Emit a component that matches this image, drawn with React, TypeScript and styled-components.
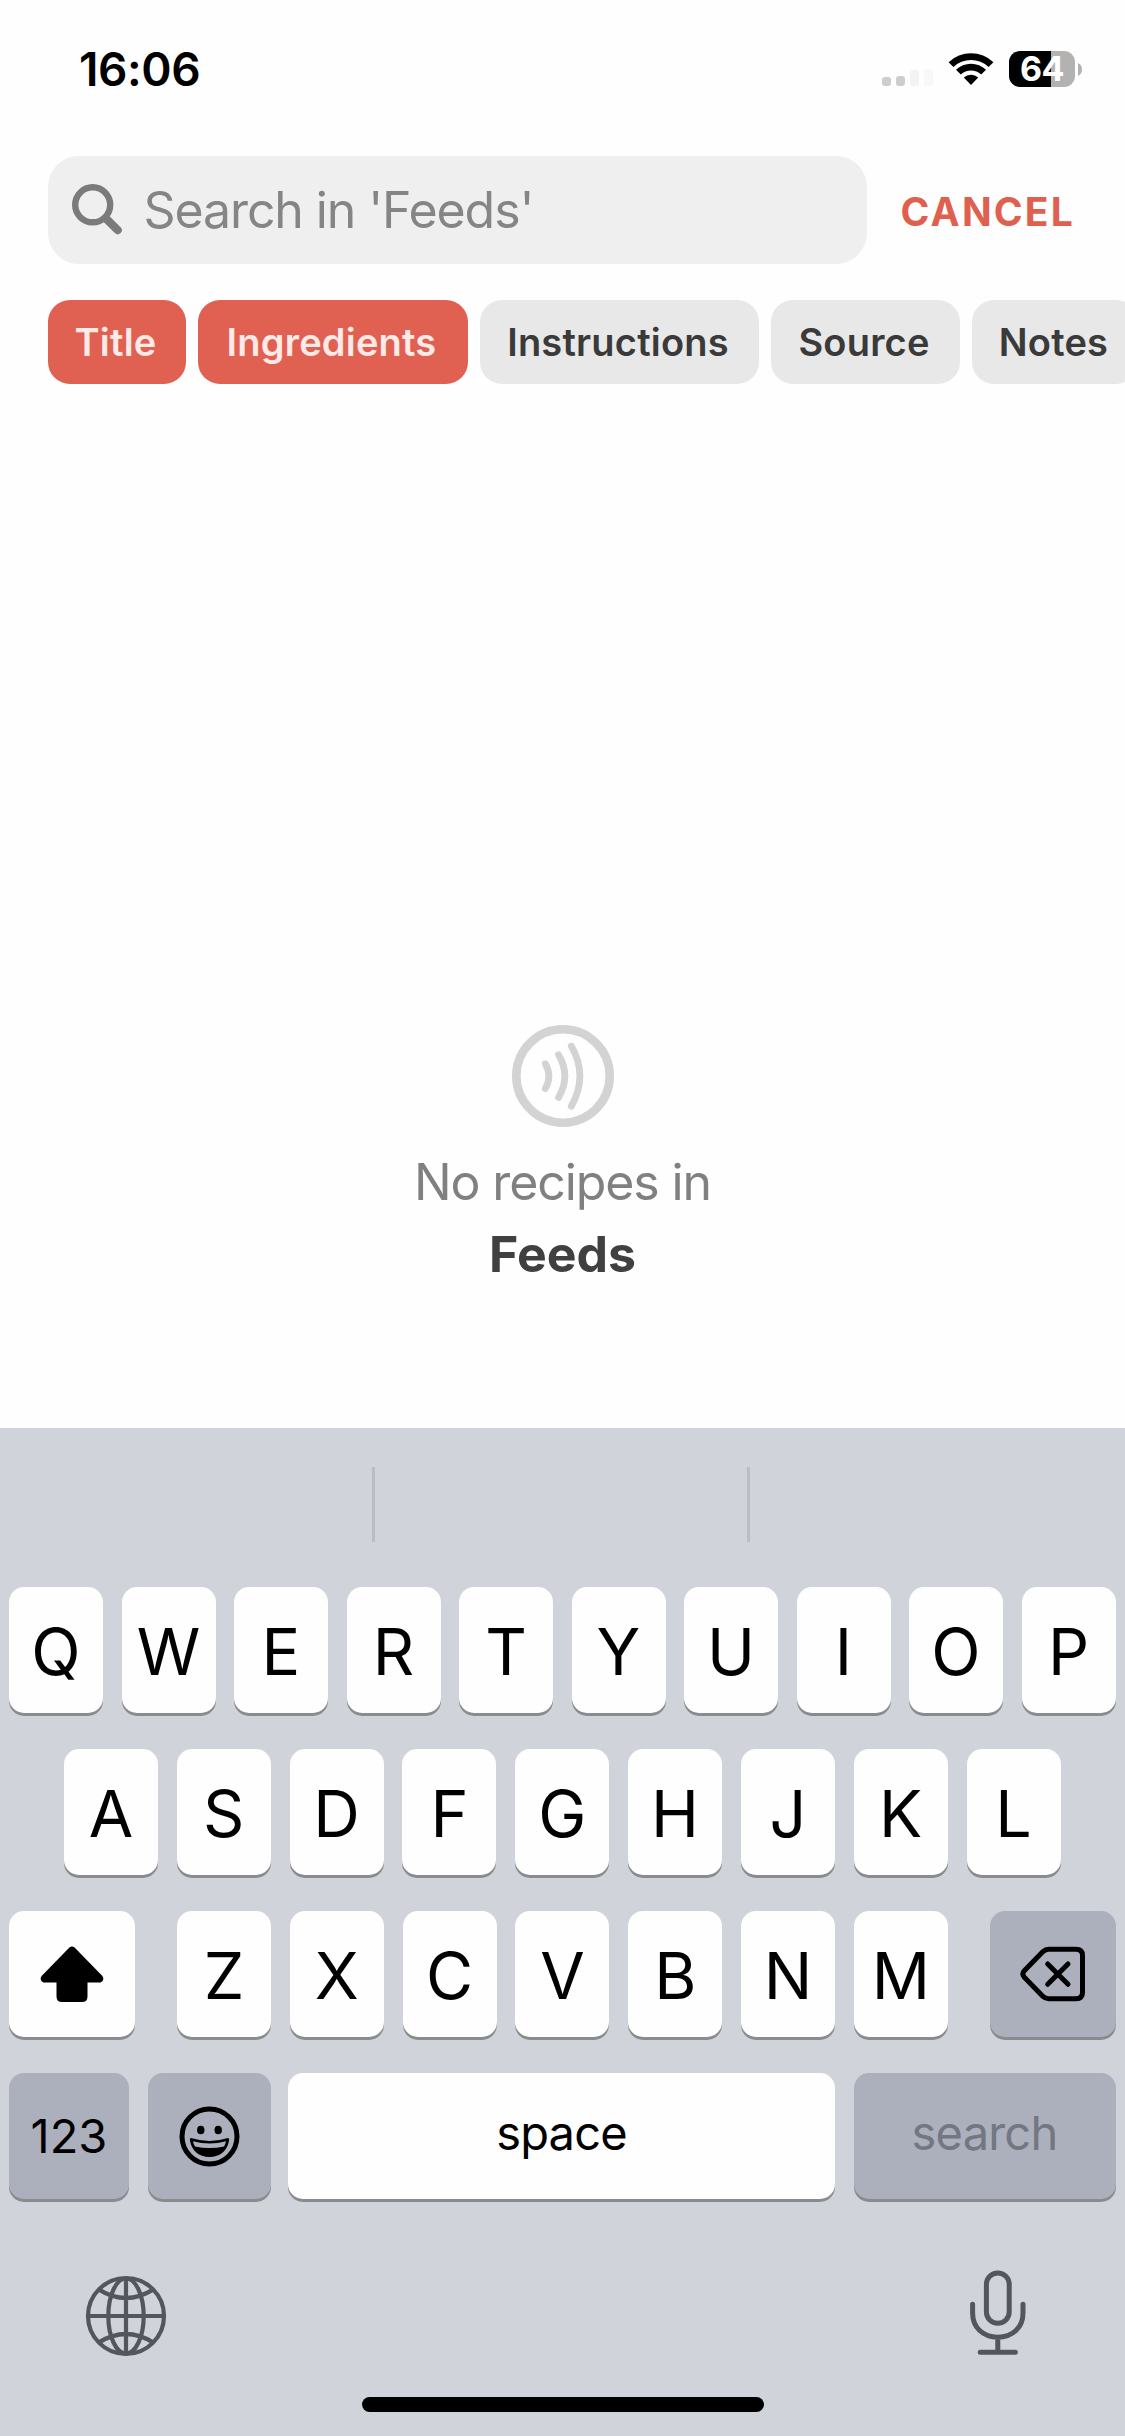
import React from "react";
import styled, { createGlobalStyle } from "styled-components";

const GlobalStyle = createGlobalStyle`
  * { box-sizing: border-box; }
  html, body { margin: 0; padding: 0; background: #fefefe; }
`;

const Screen = styled.div`
  width: 1125px;
  height: 2436px;
  display: flex;
  flex-direction: column;
  overflow: hidden;
  background: #fefefe;
  font-family: Inter, "Liberation Sans", sans-serif;
  svg { display: block; flex: none; }
`;

const StatusBar = styled.header`
  height: 138px;
  padding: 0 43px 0 79px;
  display: flex;
  align-items: center;
  justify-content: space-between;
`;

const Clock = styled.span`
  font-size: 46px;
  line-height: 60px;
  font-weight: 600;
  letter-spacing: -0.4px;
  color: #000;
`;

const StatusIcons = styled.div`
  display: flex;
  align-items: center;
  gap: 15px;
`;

const SignalBox = styled.div`
  padding-top: 16px;
`;

const Battery = styled.div`
  display: flex;
  align-items: center;
  gap: 3px;
`;

const BatteryBody = styled.div<{ $level: number }>`
  width: 66px;
  height: 36px;
  border-radius: 11px;
  display: flex;
  align-items: center;
  justify-content: center;
  background: linear-gradient(
    to right,
    #000 ${(p) => p.$level}%,
    #b2b2b2 ${(p) => p.$level}%
  );
  color: #fff;
  font-size: 34px;
  line-height: 36px;
  font-weight: 700;
  letter-spacing: -0.5px;
`;

const SearchRow = styled.div`
  height: 108px;
  margin-top: 18px;
  padding: 0 50px 0 48px;
  display: flex;
  align-items: center;
  justify-content: space-between;
`;

const SearchField = styled.div`
  width: 819px;
  height: 108px;
  padding-left: 24px;
  display: flex;
  align-items: center;
  gap: 19.5px;
  border-radius: 31px;
  background: #efefef;
`;

const Placeholder = styled.span`
  font-size: 50px;
  line-height: 60px;
  letter-spacing: -1.1px;
  color: #858585;
  white-space: nowrap;
`;

const Cancel = styled.button`
  border: 0;
  background: none;
  padding: 3px 0 0;
  font: 700 39px/48px Inter, "Liberation Sans", sans-serif;
  letter-spacing: 2.2px;
  color: #e06050;
`;

const Filters = styled.div`
  height: 84px;
  margin-top: 36px;
  padding-left: 48px;
  display: flex;
  gap: 12px;
`;

const Chip = styled.button<{ $active?: boolean; $width: number }>`
  flex: none;
  width: ${(p) => p.$width}px;
  height: 84px;
  padding: 0 3px 0 0;
  border: 0;
  border-radius: 22px;
  background: ${(p) => (p.$active ? "#e06051" : "#e8e8e8")};
  color: ${(p) => (p.$active ? "#ffeae7" : "#3a3a3a")};
  font: 600 38px/84px Inter, "Liberation Sans", sans-serif;
  letter-spacing: 0.2px;
  text-align: center;
`;

const EmptyState = styled.main`
  flex: 1;
  padding-top: 641px;
  display: flex;
  flex-direction: column;
  align-items: center;
`;

const EmptyText = styled.p`
  margin: 19px 0 0;
  font-size: 50px;
  line-height: 72px;
  text-align: center;
  letter-spacing: -1.1px;
  color: #808080;
`;

const EmptyName = styled.strong`
  display: block;
  font-weight: 700;
  color: #404040;
  letter-spacing: 0;
`;

const Keyboard = styled.section`
  height: 1008px;
  display: flex;
  flex-direction: column;
  background: #d0d3da;
`;

const Suggestions = styled.div`
  height: 159px;
  padding-top: 39px;
  display: grid;
  grid-template-columns: 375px 375px 1fr;
`;

const Suggestion = styled.div<{ $divided?: boolean }>`
  height: 75px;
  border-right: ${(p) => (p.$divided ? "3px solid #bbbdc2" : "0")};
`;

const KeyRow = styled.div<{ $left: number; $right: number }>`
  height: 126px;
  margin-bottom: 36px;
  padding: 0 ${(p) => p.$right}px 0 ${(p) => p.$left}px;
  display: flex;
  justify-content: space-between;
`;

const LetterGroup = styled.div`
  width: 771px;
  display: flex;
  justify-content: space-between;
`;

const ModeGroup = styled.div`
  display: flex;
  gap: 19px;
`;

const SpaceGroup = styled.div`
  display: flex;
  gap: 18.5px;
`;

const Key = styled.button<{ $width?: number; $dim?: boolean }>`
  flex: none;
  width: ${(p) => p.$width ?? 94}px;
  height: 126px;
  padding: 3px 0 0;
  border: 0;
  border-radius: 15px;
  display: flex;
  align-items: center;
  justify-content: center;
  background: ${(p) => (p.$dim ? "#abb0bc" : "#fefefe")};
  box-shadow: 0 3px 0 #898b8f;
  color: #000;
  font: 400 64.5px/78px Inter, "Liberation Sans", sans-serif;
`;

const IconKey = styled(Key)`
  padding: 0;
`;

const WordKey = styled(Key)<{ $muted?: boolean }>`
  padding: 0 0 7px;
  font-size: 47px;
  letter-spacing: -0.8px;
  color: ${(p) => (p.$muted ? "#737782" : "#000")};
`;

const NumberKey = styled(Key)`
  padding: 0;
  font-size: 47px;
  letter-spacing: 0;
`;

const Dock = styled.div`
  height: 120px;
  margin-top: 17px;
  padding: 18px 97px 0 85px;
  display: flex;
  justify-content: space-between;
`;

const GlobeBox = styled.div`
  padding-top: 5px;
`;

const HomeIndicator = styled.div`
  width: 402px;
  height: 15px;
  margin: 25px auto 0;
  border-radius: 8px;
  background: #000;
`;

const SignalIcon = () => (
  <svg width="51" height="18" viewBox="0 0 51 18">
    <rect x="0" y="9" width="9" height="9" rx="3" fill="#cdcdcd" />
    <rect x="14" y="8" width="9" height="10" rx="3" fill="#cdcdcd" />
    <rect x="28" y="2" width="9" height="16" rx="3" fill="#f3f3f3" />
    <rect x="42" y="1" width="9" height="17" rx="3" fill="#f8f8f8" />
  </svg>
);

const WifiIcon = () => (
  <svg width="46" height="34" viewBox="0 0 46 34">
    <path d="M0.6 10.2 A32.5 32.5 0 0 1 45.4 10.2 L40.6 15 A25.8 25.8 0 0 0 5.4 15 Z" />
    <path d="M8 17.8 A21.8 21.8 0 0 1 38 17.8 L33.2 22.5 A15 15 0 0 0 12.8 22.5 Z" />
    <path d="M15.8 25.5 A10.8 10.8 0 0 1 30.2 25.5 L23 33 Z" />
  </svg>
);

const BatteryCap = () => (
  <svg width="4" height="13" viewBox="0 0 4 13">
    <path d="M0 0 C2.8 1.2 4 3.8 4 6.5 S2.8 11.8 0 13 Z" fill="#b2b2b2" />
  </svg>
);

const SearchIcon = () => (
  <svg width="52" height="52" viewBox="0 0 52 52" fill="none" stroke="#7b7b7b" strokeLinecap="round">
    <circle cx="20.7" cy="20.8" r="17.5" strokeWidth="6.4" />
    <path d="M34 34.5 L45.7 46.2" strokeWidth="8.2" />
  </svg>
);

const FeedIcon = () => (
  <svg width="102" height="102" viewBox="0 0 102 102" fill="none" stroke="#d3d3d3" strokeLinecap="round">
    <circle cx="51" cy="51" r="46.7" strokeWidth="8.6" />
    <g strokeWidth="6.8">
      <path d="M33.3 38.7 Q40.5 51 33.3 63.6" />
      <path d="M46.5 29.7 Q59.2 51 46.5 72.4" />
      <path d="M59.3 21 Q76.5 51 59.3 81.2" />
    </g>
  </svg>
);

const ShiftIcon = () => (
  <svg width="64" height="56" viewBox="0 0 64 56">
    <path d="M29.4 1.6 Q32 -.4 34.6 1.6 L62.4 30 Q65 34.5 60.6 36.4 L47.5 36.4 V50.5 Q47.5 56 42 56 H22 Q16.5 56 16.5 50.5 V36.4 L3.4 36.4 Q-1 34.5 1.6 30 Z" />
  </svg>
);

const DeleteIcon = () => (
  <svg width="66" height="56" viewBox="0 0 66 56" fill="none" stroke="#000" strokeLinecap="round" strokeLinejoin="round">
    <path d="M28.5 3.3 H56 Q62.5 3.3 62.5 9.5 V46.5 Q62.5 52.7 56 52.7 H28.5 Q25.5 52.7 23 50.4 L4.3 31.2 Q1.4 28 4.3 24.8 L23 5.6 Q25.5 3.3 28.5 3.3 Z" strokeWidth="5" />
    <path d="M27.7 18 L48 38.3 M48 18 L27.7 38.3" strokeWidth="5" />
  </svg>
);

const EmojiIcon = () => (
  <svg width="61" height="61" viewBox="0 0 61 61">
    <circle cx="30.5" cy="30.5" r="27.5" fill="none" stroke="#000" strokeWidth="5" />
    <ellipse cx="21.8" cy="24" rx="3.7" ry="4.3" />
    <ellipse cx="39.2" cy="24" rx="3.7" ry="4.3" />
    <path d="M13 32.3 Q30.5 37.8 48 32.3 Q50.3 31.4 50.1 34 C48.8 44.5 41 51 30.5 51 S12.2 44.5 10.9 34 Q10.7 31.4 13 32.3 Z" />
    <path d="M14 35.2 Q30.5 39.6 47 35.2 Q46.4 38.5 45 40.4 Q30.5 43.6 16 40.4 Q14.6 38.5 14 35.2 Z" fill="#abb0bc" />
  </svg>
);

const GlobeIcon = () => (
  <svg width="82" height="82" viewBox="0 0 82 82" fill="none" stroke="#53575d" strokeWidth="4.2">
    <circle cx="41" cy="41" r="38" />
    <ellipse cx="41" cy="41" rx="17.7" ry="37.5" />
    <path d="M41 3 V79 M3 41 H79 M14 14.6 Q41 31.4 68 14.6 M14 67.4 Q41 50.6 68 67.4" />
  </svg>
);

const MicIcon = () => (
  <svg width="58" height="86" viewBox="0 0 58 86" fill="none" stroke="#53575d" strokeWidth="5" strokeLinecap="round">
    <rect x="16.4" y="3" width="22.8" height="50.3" rx="11.4" />
    <path d="M2.6 34.3 V43 C2.6 57.5 13 67.2 27.8 67.2 S53 57.5 53 43 V34.3 M27.8 68 V82 M10.2 82.3 H45.4" />
  </svg>
);

const filters = [
  { label: "Title", width: 138, active: true },
  { label: "Ingredients", width: 270, active: true },
  { label: "Instructions", width: 279 },
  { label: "Source", width: 189 },
  { label: "Notes", width: 166 },
];

const letters = (row: string) => row.split("").map((c) => <Key key={c}>{c}</Key>);

export default function App() {
  return (
    <Screen>
      <GlobalStyle />
      <StatusBar>
        <Clock>16:06</Clock>
        <StatusIcons>
          <SignalBox><SignalIcon /></SignalBox>
          <WifiIcon />
          <Battery>
            <BatteryBody $level={64}>64</BatteryBody>
            <BatteryCap />
          </Battery>
        </StatusIcons>
      </StatusBar>
      <SearchRow>
        <SearchField>
          <SearchIcon />
          <Placeholder>Search in 'Feeds'</Placeholder>
        </SearchField>
        <Cancel>CANCEL</Cancel>
      </SearchRow>
      <Filters>
        {filters.map((f) => (
          <Chip key={f.label} $width={f.width} $active={f.active}>
            {f.label}
          </Chip>
        ))}
      </Filters>
      <EmptyState>
        <FeedIcon />
        <EmptyText>
          No recipes in
          <EmptyName>Feeds</EmptyName>
        </EmptyText>
      </EmptyState>
      <Keyboard>
        <Suggestions>
          <Suggestion $divided />
          <Suggestion $divided />
          <Suggestion />
        </Suggestions>
        <KeyRow $left={9} $right={9.5}>{letters("QWERTYUIOP")}</KeyRow>
        <KeyRow $left={64} $right={64.5}>{letters("ASDFGHJKL")}</KeyRow>
        <KeyRow $left={9} $right={9}>
          <IconKey $width={126} aria-label="shift"><ShiftIcon /></IconKey>
          <LetterGroup>{letters("ZXCVBNM")}</LetterGroup>
          <IconKey $width={126} $dim aria-label="delete"><DeleteIcon /></IconKey>
        </KeyRow>
        <KeyRow $left={9} $right={9.5}>
          <ModeGroup>
            <NumberKey $width={120} $dim>123</NumberKey>
            <IconKey $width={123} $dim aria-label="emoji"><EmojiIcon /></IconKey>
          </ModeGroup>
          <SpaceGroup>
            <WordKey $width={547}>space</WordKey>
            <WordKey $width={262} $dim $muted>search</WordKey>
          </SpaceGroup>
        </KeyRow>
        <Dock>
          <GlobeBox><GlobeIcon /></GlobeBox>
          <MicIcon />
        </Dock>
        <HomeIndicator />
      </Keyboard>
    </Screen>
  );
}
